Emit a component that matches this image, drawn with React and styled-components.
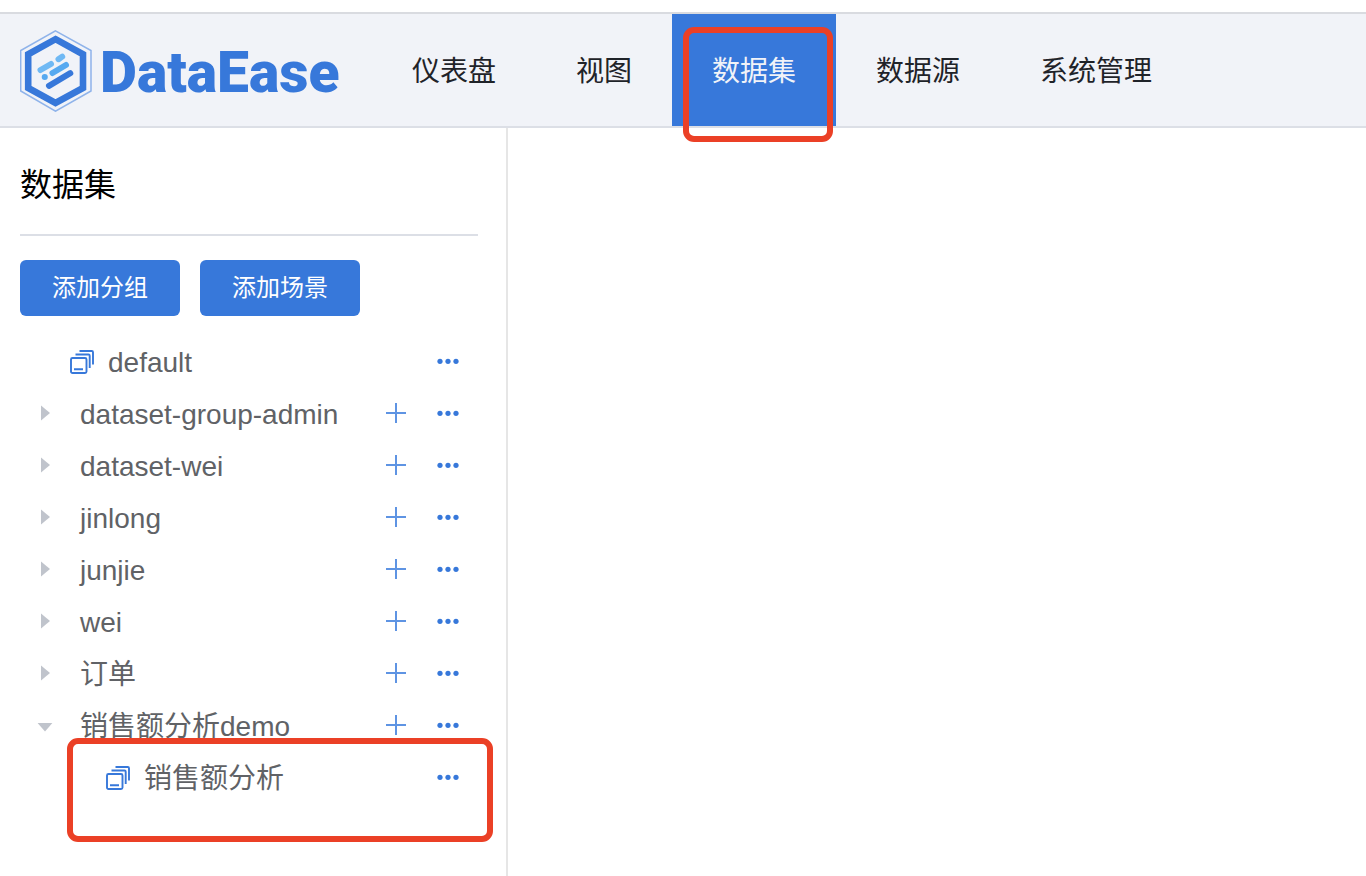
import React, { useState } from "react";
import styled, { createGlobalStyle } from "styled-components";

const blue = "#3778da";
const line = "#dcdfe6";

const GlobalStyle = createGlobalStyle`
  * { box-sizing: border-box; }
  body {
    margin: 0;
    background: #fff;
    font-family: "Liberation Sans", "Noto Sans CJK SC", sans-serif;
  }
  button { font-family: inherit; cursor: pointer; }
`;

const Page = styled.div`
  display: flex;
  flex-direction: column;
  min-height: 100vh;
  padding-top: 12px;
`;

const Header = styled.header`
  display: flex;
  align-items: stretch;
  height: 116px;
  padding-left: 20px;
  background: #f1f3f8;
  border-top: 2px solid #d9dbe0;
  border-bottom: 2px solid ${line};
`;

const Brand = styled.a`
  display: flex;
  align-items: center;
  gap: 8px;
  width: 352px;
  padding-top: 2px;
  flex-shrink: 0;
  color: ${blue};
  text-decoration: none;
`;

const BrandName = styled.span`
  padding-top: 4px;
  font-family: Roboto, sans-serif;
  font-size: 57px;
  font-weight: 900;
  line-height: 64px;
`;

const Nav = styled.nav`
  display: flex;
`;

const NavLink = styled.a`
  position: relative;
  display: flex;
  align-items: center;
  padding: 4px 40px 0;
  font-size: 28px;
  line-height: 40px;
  white-space: nowrap;
  text-decoration: none;
  color: ${(p) => (p.$active ? "#f1f3f8" : "#1f2329")};
  background: ${(p) => (p.$active ? blue : "transparent")};
`;

const Marker = styled.span`
  position: absolute;
  z-index: 1;
  border: 6px solid #eb4026;
  border-radius: 11px;
  pointer-events: none;
`;

const NavMarker = styled(Marker)`
  inset: 13px 3px -16px 11px;
`;

const RowMarker = styled(Marker)`
  inset: -14px 13px -38px 67px;
`;

const Body = styled.div`
  display: flex;
  flex: 1;
`;

const Sidebar = styled.aside`
  width: 508px;
  flex-shrink: 0;
  border-right: 2px solid #e6e6e6;
`;

const SidebarTop = styled.div`
  padding: 0 28px 20px 20px;
`;

const Title = styled.h1`
  margin: 0 0 24px;
  padding: 32px 0 24px;
  border-bottom: 2px solid ${line};
  font-size: 32px;
  font-weight: 400;
  line-height: 50px;
  color: #000;
`;

const Actions = styled.div`
  display: flex;
  gap: 20px;
`;

const ActionButton = styled.button`
  height: 56px;
  padding: 0 32px;
  border: 0;
  border-radius: 6px;
  background: ${blue};
  color: #fff;
  font-size: 24px;
  line-height: 32px;
`;

const Tree = styled.ul`
  margin: 0;
  padding: 0;
  list-style: none;
`;

const Row = styled.li`
  position: relative;
  display: flex;
  align-items: center;
  height: 52px;
  padding-left: ${(p) => 20 + p.$depth * 36}px;
  padding-right: 32px;
`;

const IconButton = styled.button`
  display: flex;
  align-items: center;
  justify-content: center;
  width: 52px;
  height: 50px;
  padding: 0;
  margin-bottom: 2px;
  border: 0;
  background: none;
  color: ${blue};
`;

const Toggle = styled(IconButton)`
  width: 50px;
  color: #c0c4cc;
`;

const Spacer = styled.span`
  width: 50px;
`;

const Label = styled.span`
  flex: 1;
  margin-left: ${(p) => (p.$leaf ? 14 : 10)}px;
  padding-top: 2px;
  font-size: 28px;
  line-height: 40px;
  white-space: nowrap;
  color: #606266;
`;

const Content = styled.main`
  flex: 1;
`;

const Logo = () => (
  <svg width="72" height="82" viewBox="0 0 72 82" fill="none" aria-hidden="true">
    <path d="M35.500 .8 71 20.500V61L35.500 81.200.700 61V20.500Z" stroke="#8fb3ea" strokeWidth="1.500" />
    <path d="M35.500 9.200 63 24.300V58L35.500 73 8.200 58V24.300Z" stroke={blue} strokeWidth="6.600" />
    <g strokeLinecap="round" strokeWidth="6">
      <path d="M20.500 40 31 34M38.500 29.200 42.200 26.600" stroke="#70b9f4" />
      <path d="M32.500 43 46 35M24.700 47h.1" stroke="#56a9f0" />
      <path d="M29 55.800 50.300 43.200" stroke={blue} />
    </g>
  </svg>
);

const SceneIcon = () => (
  <svg width="24" height="24" viewBox="0 0 24 24" fill="none" stroke={blue} strokeWidth="1.900" aria-hidden="true">
    <rect x="1" y="8" width="15.500" height="15" rx="1.500" />
    <path d="M4 19.200h9M5.500 4.500H18.500Q19.700 4.500 19.700 5.700V18M9.500 1H21.800Q23 1 23 2.300V14.500" />
  </svg>
);

const PlusIcon = () => (
  <svg width="20" height="20" viewBox="0 0 20 20" stroke="#5e94e3" strokeWidth="2" aria-hidden="true">
    <path d="M0 10h20M10 0v20" />
  </svg>
);

const DotsIcon = () => (
  <svg width="22" height="6" viewBox="0 0 22 6" fill={blue} aria-hidden="true">
    <circle cx="3" cy="3.300" r="2.600" />
    <circle cx="11" cy="3.300" r="2.600" />
    <circle cx="19" cy="3.300" r="2.600" />
  </svg>
);

const Caret = ({ open }) => (
  <svg width="16" height="16" viewBox="0 0 16 16" fill="currentColor" aria-hidden="true">
    <path d={open ? "M.6 6H15.400L8 14.500Z" : "M4 .6V15.400L13 8Z"} />
  </svg>
);

const navItems = ["仪表盘", "视图", "数据集", "数据源", "系统管理"];

const items = [
  { name: "default", leaf: true },
  { name: "dataset-group-admin" },
  { name: "dataset-wei" },
  { name: "jinlong" },
  { name: "junjie" },
  { name: "wei" },
  { name: "订单" },
  { name: "销售额分析demo", children: [{ name: "销售额分析", leaf: true, marked: true }] },
];

function TreeRow({ item, depth, open, onToggle }) {
  return (
    <Row $depth={depth}>
      {item.leaf ? (
        <>
          <Spacer />
          <SceneIcon />
        </>
      ) : (
        <Toggle type="button" aria-label={`展开 ${item.name}`} aria-expanded={open} onClick={onToggle}>
          <Caret open={open} />
        </Toggle>
      )}
      <Label $leaf={item.leaf}>{item.name}</Label>
      {!item.leaf && (
        <IconButton type="button" aria-label={`添加到 ${item.name}`}>
          <PlusIcon />
        </IconButton>
      )}
      <IconButton type="button" aria-label={`更多 ${item.name}`}>
        <DotsIcon />
      </IconButton>
      {item.marked && <RowMarker />}
    </Row>
  );
}

export default function App() {
  const [opened, setOpened] = useState(["销售额分析demo"]);
  const toggle = (name) =>
    setOpened((list) => (list.includes(name) ? list.filter((n) => n !== name) : [...list, name]));

  return (
    <Page>
      <GlobalStyle />
      <Header>
        <Brand href="#">
          <Logo />
          <BrandName>DataEase</BrandName>
        </Brand>
        <Nav>
          {navItems.map((name) => (
            <NavLink key={name} href="#" $active={name === "数据集"}>
              {name}
              {name === "数据集" && <NavMarker />}
            </NavLink>
          ))}
        </Nav>
      </Header>
      <Body>
        <Sidebar>
          <SidebarTop>
            <Title>数据集</Title>
            <Actions>
              <ActionButton type="button">添加分组</ActionButton>
              <ActionButton type="button">添加场景</ActionButton>
            </Actions>
          </SidebarTop>
          <Tree>
            {items.map((item) => {
              const open = opened.includes(item.name);
              return (
                <React.Fragment key={item.name}>
                  <TreeRow item={item} depth={0} open={open} onToggle={() => toggle(item.name)} />
                  {open &&
                    item.children?.map((child) => <TreeRow key={child.name} item={child} depth={1} />)}
                </React.Fragment>
              );
            })}
          </Tree>
        </Sidebar>
        <Content />
      </Body>
    </Page>
  );
}
